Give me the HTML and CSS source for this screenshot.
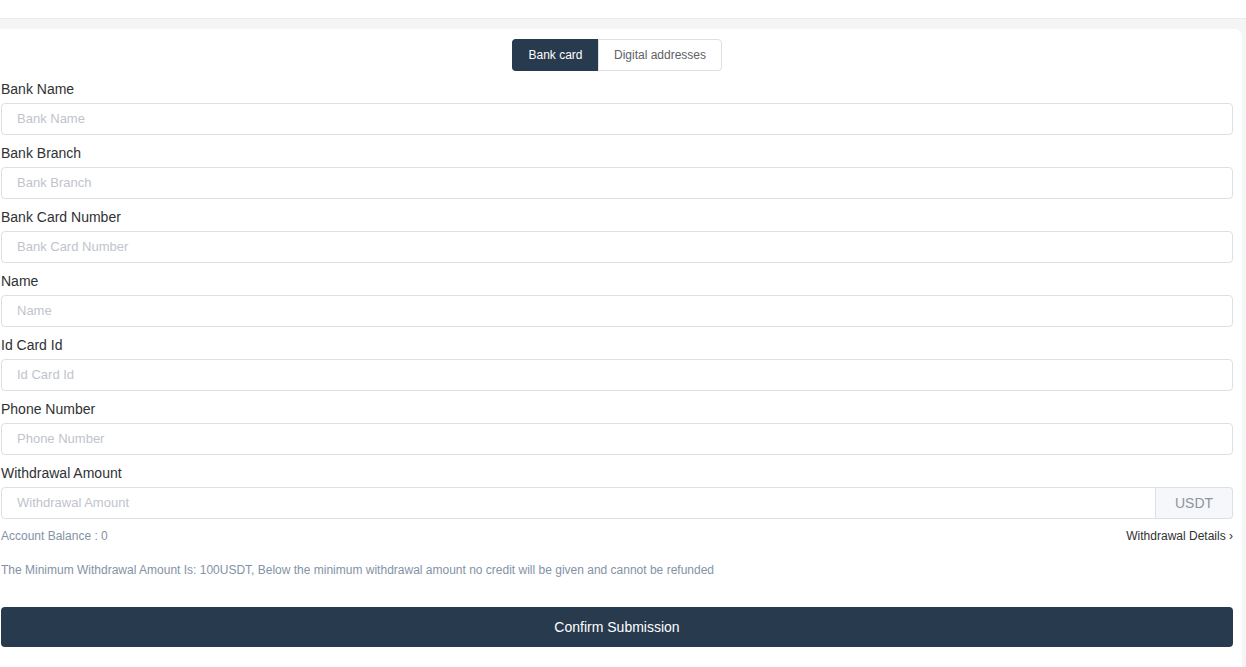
FILE: index.html
```html
<!DOCTYPE html>
<html lang="en">
<head>
    <meta charset="UTF-8">
    <meta name="viewport" content="width=device-width, initial-scale=1.0">
    <title>Withdraw</title>
    <link rel="stylesheet" href="styles.css">
</head>
<body>
    <div class="topbar"></div>

    <div class="page">
        <div class="card">
            <div class="tabs">
                <button class="tab active">Bank card</button>
                <button class="tab">Digital addresses</button>
            </div>

            <div class="field">
                <label>Bank Name</label>
                <input type="text" placeholder="Bank Name">
            </div>
            <div class="field">
                <label>Bank Branch</label>
                <input type="text" placeholder="Bank Branch">
            </div>
            <div class="field">
                <label>Bank Card Number</label>
                <input type="text" placeholder="Bank Card Number">
            </div>
            <div class="field">
                <label>Name</label>
                <input type="text" placeholder="Name">
            </div>
            <div class="field">
                <label>Id Card Id</label>
                <input type="text" placeholder="Id Card Id">
            </div>
            <div class="field">
                <label>Phone Number</label>
                <input type="text" placeholder="Phone Number">
            </div>
            <div class="field">
                <label>Withdrawal Amount</label>
                <div class="input-group">
                    <input type="text" placeholder="Withdrawal Amount">
                    <span class="append">USDT</span>
                </div>
            </div>

            <div class="balance-row">
                <span class="balance">Account Balance : 0</span>
                <a class="details" href="#">Withdrawal Details ›</a>
            </div>

            <p class="notice">The Minimum Withdrawal Amount Is: 100USDT, Below the minimum withdrawal amount no credit will be given and cannot be refunded</p>

            <button class="submit">Confirm Submission</button>
        </div>
    </div>
</body>
</html>
```

FILE: styles.css
```css
* {
    box-sizing: border-box;
}

body {
    font-family: Arial, "Liberation Sans", Helvetica, sans-serif;
    margin: 0;
    background: #fff;
    color: #303133;
}

.topbar {
    height: 19px;
    background: #fff;
    border-bottom: 1px solid #ebebeb;
}

.page {
    background: #f5f5f5;
    padding: 10px 4px 0 0;
}

.card {
    background: #fff;
    border-radius: 0 8px 0 0;
    padding: 10px 9px 20px 1px;
}

.tabs {
    display: flex;
    justify-content: center;
    margin-bottom: 10px;
}

.tab {
    height: 32px;
    padding: 0;
    font-family: inherit;
    font-size: 12px;
    white-space: nowrap;
    color: #606266;
    background: #fff;
    border: 1px solid #dcdfe6;
    cursor: pointer;
}

.tab:first-child {
    border-radius: 4px 0 0 4px;
    border-right: none;
    width: 86px;
}

.tab:last-child {
    border-radius: 0 4px 4px 0;
    width: 124px;
}

.tab.active {
    background: #283a4e;
    border-color: #283a4e;
    color: #fff;
}

.field {
    margin-bottom: 10px;
}

.field label {
    display: block;
    font-size: 14px;
    line-height: 16px;
    padding-bottom: 6px;
    color: #303133;
}

.field input {
    display: block;
    width: 100%;
    height: 32px;
    padding: 0 15px 1px;
    font-family: inherit;
    font-size: 13px;
    color: #606266;
    border: 1px solid #dcdfe6;
    border-radius: 4px;
    outline: none;
}

.field input::placeholder {
    color: #c0c4cc;
}

.input-group {
    display: flex;
}

.input-group input {
    flex: 1;
    border-radius: 4px 0 0 4px;
}

.append {
    width: 77px;
    height: 32px;
    line-height: 30px;
    text-align: center;
    font-size: 14px;
    color: #909399;
    background: #f5f7fa;
    border: 1px solid #dcdfe6;
    border-left: none;
    border-radius: 0 4px 4px 0;
}

.balance-row {
    display: flex;
    justify-content: space-between;
    font-size: 12px;
    line-height: 16px;
    margin-top: -1px;
}

.balance {
    color: #8492a6;
}

.details {
    color: #303133;
    text-decoration: none;
}

.notice {
    margin: 18px 0 29px;
    font-size: 12px;
    line-height: 16px;
    color: #8492a6;
}

.submit {
    display: block;
    width: 100%;
    height: 40px;
    font-family: inherit;
    font-size: 14px;
    color: #fff;
    background: #283a4e;
    border: none;
    border-radius: 4px;
    cursor: pointer;
}
```
